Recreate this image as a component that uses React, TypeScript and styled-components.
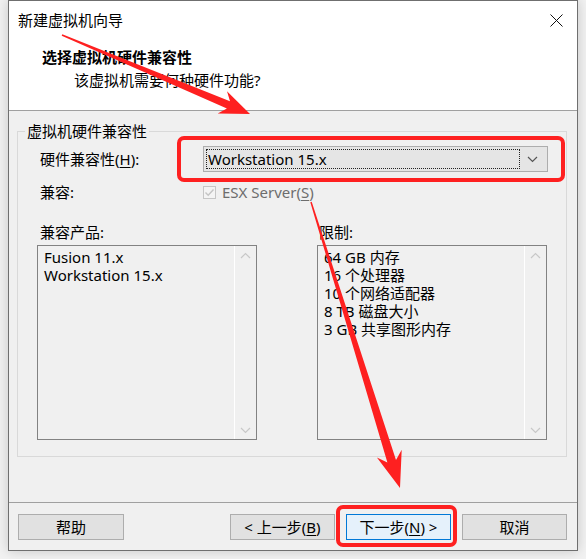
import React from 'react';
import styled, {createGlobalStyle} from 'styled-components';

const GlobalStyle = createGlobalStyle`
  html, body {
    margin: 0;
    padding: 0;
    background: #f2f2f2;
  }
  body {
    font-family: "Noto Sans", "Noto Sans CJK SC", sans-serif;
    font-size: 15px;
    color: #000;
  }
`;

const Page = styled.div`
  position: relative;
  width: 586px;
  height: 559px;
  overflow: hidden;
`;

const Window = styled.div`
  margin-left: 8px;
  width: 570px;
  height: 551px;
  box-sizing: border-box;
  border: 1px solid #6f6f6f;
  background: #f0f0f0;
  display: flex;
  flex-direction: column;
  box-shadow: 0 0 12px rgba(0, 0, 0, 0.18);
`;

const Header = styled.header`
  height: 110px;
  box-sizing: border-box;
  background: #fff;
  border-bottom: 1px solid #a0a0a0;
`;

const TitleBar = styled.div`
  height: 38px;
  display: flex;
  align-items: center;
  justify-content: space-between;
  padding: 0 14px 0 9px;
  line-height: 20px;
`;

const Heading = styled.div`
  padding-left: 33px;
  margin-top: 7px;
  font-weight: bold;
  line-height: 22px;
`;

const SubHeading = styled.div`
  padding-left: 65px;
  margin-top: 1px;
  line-height: 22px;
`;

const Body = styled.main`
  flex: 1;
  padding: 10px 10px 0 8px;
`;

const Group = styled.fieldset`
  margin: 0;
  padding: 0 18px 0 0;
  height: 336px;
  box-sizing: border-box;
  border: 1px solid #d9d9d9;
  min-width: 0;
`;

const Legend = styled.legend`
  margin-left: 7px;
  padding: 0 2px;
  line-height: 20px;
`;

const FieldRow = styled.div<{$top: number; $height: number}>`
  display: grid;
  grid-template-columns: 163px 1fr;
  align-items: center;
  margin-top: ${p => p.$top}px;
  height: ${p => p.$height}px;
  padding-left: 22px;
  line-height: 20px;
`;

const Key = styled.span`
  text-decoration: underline;
  text-underline-offset: 2px;
`;

const Combo = styled.div`
  height: 26px;
  box-sizing: border-box;
  border: 1px solid #adadad;
  background: #e5e5e5;
  display: flex;
  align-items: center;
  padding: 2px;
`;

const ComboValue = styled.div`
  flex: 1;
  height: 100%;
  box-sizing: border-box;
  border: 1px dotted #222;
  display: flex;
  align-items: center;
  padding-left: 1px;
  line-height: 20px;
`;

const ComboArrow = styled.div`
  width: 25px;
  display: flex;
  justify-content: center;
  align-items: center;
`;

const CheckLine = styled.label`
  display: flex;
  align-items: center;
  gap: 6px;
  color: #6d6d6d;
`;

const CheckBox = styled.span`
  width: 13px;
  height: 13px;
  box-sizing: border-box;
  border: 1px solid #c6c6c6;
  background: #f4f4f4;
  display: flex;
  align-items: center;
  justify-content: center;
`;

const Lists = styled.div`
  display: grid;
  grid-template-columns: 220px 230px;
  column-gap: 60px;
  padding-left: 19px;
  margin-top: 20px;
`;

const ListLabel = styled.div<{$indent: number}>`
  line-height: 20px;
  padding-left: ${p => p.$indent}px;
  margin-bottom: 3px;
`;

const ListBox = styled.div`
  height: 195px;
  box-sizing: border-box;
  border: 1px solid #828282;
  background: #f0f0f0;
  display: flex;
`;

const ListItems = styled.div`
  flex: 1;
  padding: 2px 6px;
  line-height: 18px;
`;

const ScrollBar = styled.div`
  width: 21px;
  border-left: 1px solid #fff;
  display: flex;
  flex-direction: column;
  justify-content: space-between;
  align-items: center;
  padding: 6px 0 5px;
`;

const Footer = styled.footer`
  height: 48px;
  box-sizing: border-box;
  border-top: 1px solid #a0a0a0;
  display: flex;
  align-items: flex-start;
  justify-content: space-between;
  padding: 11px 10px 0 9px;
`;

const ButtonGroup = styled.div`
  display: flex;
  gap: 11px;
`;

const Button = styled.button<{$primary?: boolean; $wide?: boolean}>`
  width: ${p => (p.$wide ? 106 : 105)}px;
  height: 26px;
  box-sizing: border-box;
  border: 1px solid ${p => (p.$primary ? '#0078d7' : '#adadad')};
  background: ${p => (p.$primary ? '#e5f1fb' : '#e1e1e1')};
  font-family: inherit;
  font-size: 15px;
  line-height: 20px;
  color: #000;
  padding: 0;
`;

const Annotations = styled.svg`
  position: absolute;
  left: 0;
  top: 0;
  pointer-events: none;
`;

const Chevron = ({up, color}: {up?: boolean; color: string}) => (
  <svg width="11" height="7" viewBox="0 0 11 7">
    <path d={up ? 'M1 6 L5.5 1.5 L10 6' : 'M1 1 L5.5 5.5 L10 1'} fill="none" stroke={color} strokeWidth="1.2" />
  </svg>
);

function arrowPoints(x1: number, y1: number, x2: number, y2: number, headLen: number, headHalf: number, w0: number, w1: number) {
  const dx = x2 - x1;
  const dy = y2 - y1;
  const len = Math.hypot(dx, dy);
  const ux = dx / len;
  const uy = dy / len;
  const nx = -uy;
  const ny = ux;
  const bx = x2 - ux * headLen;
  const by = y2 - uy * headLen;
  const kx = x2 - ux * headLen * 0.78;
  const ky = y2 - uy * headLen * 0.78;
  const pts = [
    [x1 + nx * w0 / 2, y1 + ny * w0 / 2],
    [kx + nx * w1 / 2, ky + ny * w1 / 2],
    [bx + nx * headHalf, by + ny * headHalf],
    [x2, y2],
    [bx - nx * headHalf, by - ny * headHalf],
    [kx - nx * w1 / 2, ky - ny * w1 / 2],
    [x1 - nx * w0 / 2, y1 - ny * w0 / 2],
  ];
  return pts.map(p => p.map(v => v.toFixed(1)).join(',')).join(' ');
}

const products = ['Fusion 11.x', 'Workstation 15.x'];
const limits = ['64 GB 内存', '16 个处理器', '10 个网络适配器', '8 TB 磁盘大小', '3 GB 共享图形内存'];

export default function App() {
  const red = '#fe2020';
  return (
    <Page>
      <GlobalStyle />
      <Window>
        <Header>
          <TitleBar>
            <span>新建虚拟机向导</span>
            <svg width="13" height="13" viewBox="0 0 13 13">
              <path d="M0.5 0.5 L12.5 12.5 M12.5 0.5 L0.5 12.5" stroke="#111" strokeWidth="1" />
            </svg>
          </TitleBar>
          <Heading>选择虚拟机硬件兼容性</Heading>
          <SubHeading>该虚拟机需要何种硬件功能?</SubHeading>
        </Header>
        <Body>
          <Group>
            <Legend>虚拟机硬件兼容性</Legend>
            <FieldRow $top={5} $height={26}>
              <span>硬件兼容性(<Key>H</Key>):</span>
              <Combo>
                <ComboValue>Workstation 15.x</ComboValue>
                <ComboArrow>
                  <Chevron color="#555" />
                </ComboArrow>
              </Combo>
            </FieldRow>
            <FieldRow $top={10} $height={20}>
              <span>兼容:</span>
              <CheckLine>
                <CheckBox>
                  <svg width="11" height="11" viewBox="0 0 11 11">
                    <path d="M1.5 5.5 L4.2 8.2 L9.5 2.5" fill="none" stroke="#c4c4c4" strokeWidth="1.4" />
                  </svg>
                </CheckBox>
                <span>ESX Server(<Key>S</Key>)</span>
              </CheckLine>
            </FieldRow>
            <Lists>
              <ListLabel $indent={3}>兼容产品:</ListLabel>
              <ListLabel $indent={2}>限制:</ListLabel>
              <ListBox>
                <ListItems>
                  {products.map(p => <div key={p}>{p}</div>)}
                </ListItems>
                <ScrollBar>
                  <Chevron up color="#c8c8c8" />
                  <Chevron color="#c8c8c8" />
                </ScrollBar>
              </ListBox>
              <ListBox>
                <ListItems>
                  {limits.map(l => <div key={l}>{l}</div>)}
                </ListItems>
                <ScrollBar>
                  <Chevron up color="#c8c8c8" />
                  <Chevron color="#c8c8c8" />
                </ScrollBar>
              </ListBox>
            </Lists>
          </Group>
        </Body>
        <Footer>
          <Button $wide>帮助</Button>
          <ButtonGroup>
            <Button>&lt; 上一步(<Key>B</Key>)</Button>
            <Button $primary>下一步(<Key>N</Key>) &gt;</Button>
            <Button>取消</Button>
          </ButtonGroup>
        </Footer>
      </Window>
      <Annotations width="586" height="559" viewBox="0 0 586 559">
        <rect x="179" y="138" width="384" height="42" rx="5" fill="none" stroke={red} strokeWidth="4" />
        <rect x="338" y="507" width="117" height="38" rx="5" fill="none" stroke={red} strokeWidth="4" />
        <polygon points={arrowPoints(62, 35, 250, 114, 30, 12, 1.5, 8)} fill={red} />
        <polygon points={arrowPoints(311, 202, 400, 488, 36, 13, 1.5, 9)} fill={red} />
      </Annotations>
    </Page>
  );
}
